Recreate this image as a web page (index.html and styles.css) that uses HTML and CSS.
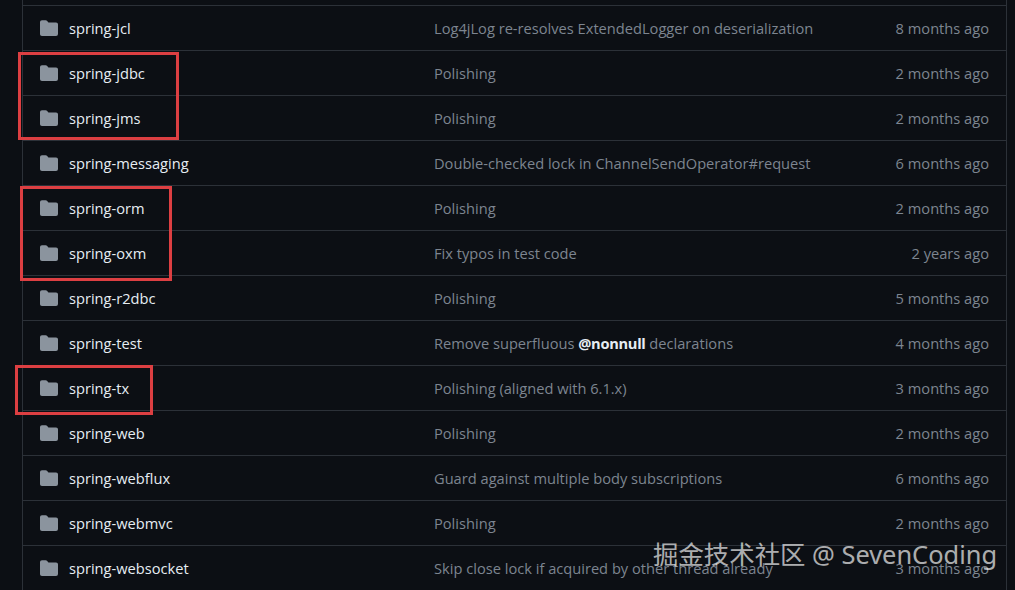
FILE: index.html
```html
<!DOCTYPE html>
<html lang="en">
<head>
    <meta charset="UTF-8">
    <meta name="viewport" content="width=device-width, initial-scale=1.0">
    <title>spring-framework</title>
    <link rel="stylesheet" href="styles.css">
</head>
<body>
    <svg class="sprite" width="0" height="0">
        <symbol id="folder" viewBox="0 0 16 16">
            <path d="M1.75 1A1.75 1.75 0 0 0 0 2.75v10.5C0 14.216.784 15 1.75 15h12.5A1.75 1.75 0 0 0 16 13.25v-8.5A1.75 1.75 0 0 0 14.25 3H7.5a.25.25 0 0 1-.2-.1l-.9-1.2C6.07 1.26 5.55 1 5 1H1.75Z"/>
        </symbol>
    </svg>

    <div class="files">
        <div class="row">
            <a class="name"><svg class="icon"><use href="#folder"/></svg>spring-jcl</a>
            <span class="msg">Log4jLog re-resolves ExtendedLogger on deserialization</span>
            <span class="age">8 months ago</span>
        </div>
        <div class="row">
            <a class="name"><svg class="icon"><use href="#folder"/></svg>spring-jdbc</a>
            <span class="msg">Polishing</span>
            <span class="age">2 months ago</span>
        </div>
        <div class="row">
            <a class="name"><svg class="icon"><use href="#folder"/></svg>spring-jms</a>
            <span class="msg">Polishing</span>
            <span class="age">2 months ago</span>
        </div>
        <div class="row">
            <a class="name"><svg class="icon"><use href="#folder"/></svg>spring-messaging</a>
            <span class="msg">Double-checked lock in ChannelSendOperator#request</span>
            <span class="age">6 months ago</span>
        </div>
        <div class="row">
            <a class="name"><svg class="icon"><use href="#folder"/></svg>spring-orm</a>
            <span class="msg">Polishing</span>
            <span class="age">2 months ago</span>
        </div>
        <div class="row">
            <a class="name"><svg class="icon"><use href="#folder"/></svg>spring-oxm</a>
            <span class="msg">Fix typos in test code</span>
            <span class="age">2 years ago</span>
        </div>
        <div class="row">
            <a class="name"><svg class="icon"><use href="#folder"/></svg>spring-r2dbc</a>
            <span class="msg">Polishing</span>
            <span class="age">5 months ago</span>
        </div>
        <div class="row">
            <a class="name"><svg class="icon"><use href="#folder"/></svg>spring-test</a>
            <span class="msg">Remove superfluous <b>@nonnull</b> declarations</span>
            <span class="age">4 months ago</span>
        </div>
        <div class="row">
            <a class="name"><svg class="icon"><use href="#folder"/></svg>spring-tx</a>
            <span class="msg">Polishing (aligned with 6.1.x)</span>
            <span class="age">3 months ago</span>
        </div>
        <div class="row">
            <a class="name"><svg class="icon"><use href="#folder"/></svg>spring-web</a>
            <span class="msg">Polishing</span>
            <span class="age">2 months ago</span>
        </div>
        <div class="row">
            <a class="name"><svg class="icon"><use href="#folder"/></svg>spring-webflux</a>
            <span class="msg">Guard against multiple body subscriptions</span>
            <span class="age">6 months ago</span>
        </div>
        <div class="row">
            <a class="name"><svg class="icon"><use href="#folder"/></svg>spring-webmvc</a>
            <span class="msg">Polishing</span>
            <span class="age">2 months ago</span>
        </div>
        <div class="row">
            <a class="name"><svg class="icon"><use href="#folder"/></svg>spring-websocket</a>
            <span class="msg">Skip close lock if acquired by other thread already</span>
            <span class="age">3 months ago</span>
        </div>
    </div>

    <div class="mark mark-jdbc"></div>
    <div class="mark mark-orm"></div>
    <div class="mark mark-tx"></div>

    <div class="watermark">掘金技术社区 @ SevenCoding</div>
</body>
</html>
```

FILE: styles.css
```css
html, body {
    height: 100%;
}

body {
    margin: 0;
    position: relative;
    overflow: hidden;
    background-color: #0c0f14;
    font-family: "Open Sans", "Noto Sans", sans-serif;
    font-size: 14.65px;
    color: #e6edf3;
}

.sprite {
    position: absolute;
}

.files {
    margin: 0 8px 0 22px;
    padding-top: 5px;
    height: 100%;
    box-sizing: border-box;
    border-left: 1px solid #2c3138;
    border-right: 1px solid #2c3138;
}

.row {
    display: grid;
    grid-template-columns: 394px 1fr auto;
    align-items: center;
    height: 45px;
    box-sizing: border-box;
    padding: 0 17px;
    border-top: 1px solid #2c3138;
}

.name {
    display: flex;
    align-items: center;
    gap: 11px;
}

.icon {
    width: 18px;
    height: 18px;
    fill: #8b949e;
}

.msg,
.age {
    color: #7d8590;
}

.msg b {
    color: #e6edf3;
    letter-spacing: -0.3px;
}

.mark {
    position: absolute;
    box-sizing: border-box;
    border: 3.5px solid #dd3f42;
}

.mark-jdbc {
    left: 18px;
    top: 52px;
    width: 161px;
    height: 88px;
}

.mark-orm {
    left: 20px;
    top: 186px;
    width: 152px;
    height: 95px;
}

.mark-tx {
    left: 15px;
    top: 365px;
    width: 138px;
    height: 50px;
}

.watermark {
    position: absolute;
    right: 18px;
    top: 537px;
    font-family: "Noto Sans", "Noto Sans CJK SC", sans-serif;
    font-size: 25.4px;
    line-height: 34px;
    color: rgba(255, 255, 255, 0.68);
    white-space: nowrap;
}
```
